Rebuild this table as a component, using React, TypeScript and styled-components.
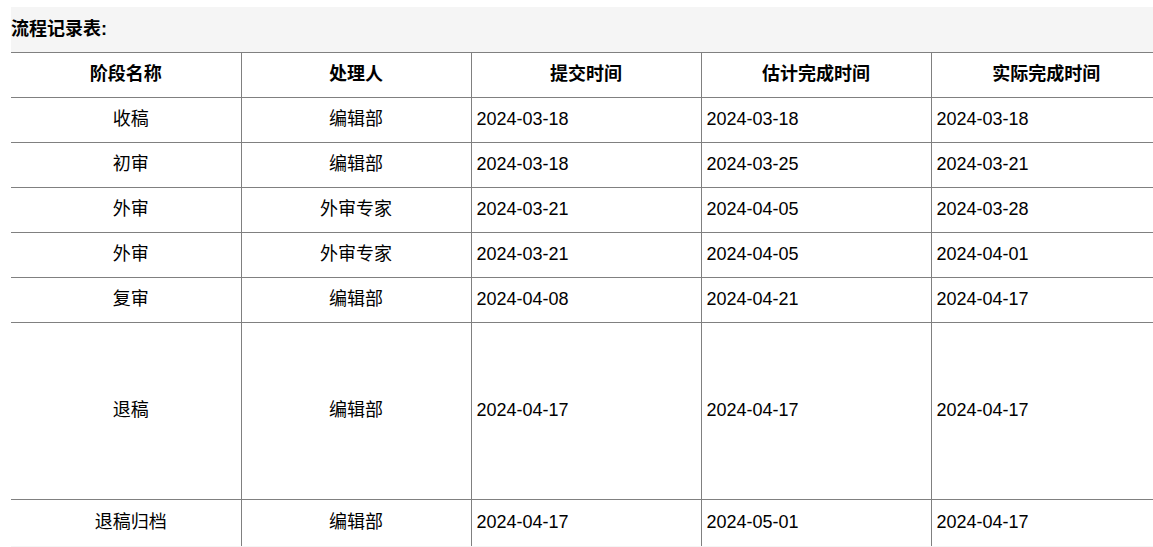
import React, { FC } from "react";
import styled, { createGlobalStyle } from "styled-components";

interface IRecord {
	stage: string;
	handler: string;
	submitted: string;
	estimated: string;
	finished: string;
	tall?: boolean;
}

const records: IRecord[] = [
	{ stage: "收稿", handler: "编辑部", submitted: "2024-03-18", estimated: "2024-03-18", finished: "2024-03-18" },
	{ stage: "初审", handler: "编辑部", submitted: "2024-03-18", estimated: "2024-03-25", finished: "2024-03-21" },
	{ stage: "外审", handler: "外审专家", submitted: "2024-03-21", estimated: "2024-04-05", finished: "2024-03-28" },
	{ stage: "外审", handler: "外审专家", submitted: "2024-03-21", estimated: "2024-04-05", finished: "2024-04-01" },
	{ stage: "复审", handler: "编辑部", submitted: "2024-04-08", estimated: "2024-04-21", finished: "2024-04-17" },
	{ stage: "退稿", handler: "编辑部", submitted: "2024-04-17", estimated: "2024-04-17", finished: "2024-04-17", tall: true },
	{ stage: "退稿归档", handler: "编辑部", submitted: "2024-04-17", estimated: "2024-05-01", finished: "2024-04-17" },
];

const headers = ["阶段名称", "处理人", "提交时间", "估计完成时间", "实际完成时间"];

const App: FC = () => {
	return (
		<>
			<GlobalStyle />
			<Page>
				<Panel>
					<Title>流程记录表:</Title>
					<Table>
						<thead>
							<tr>
								{headers.map((h) => (
									<HeadCell key={h}>{h}</HeadCell>
								))}
							</tr>
						</thead>
						<tbody>
							{records.map((r, i) => (
								<Row key={i} $tall={r.tall}>
									<Cell $center $indent>
										{r.stage}
									</Cell>
									<Cell $center>{r.handler}</Cell>
									<Cell>{r.submitted}</Cell>
									<Cell>{r.estimated}</Cell>
									<Cell>{r.finished}</Cell>
								</Row>
							))}
						</tbody>
					</Table>
				</Panel>
			</Page>
		</>
	);
};

export default App;

const GlobalStyle = createGlobalStyle`
	body {
		margin: 0;
		overflow: hidden;
		background: #fff;
		font-family: "Liberation Sans", "Noto Sans CJK SC", sans-serif;
		color: #000;
	}
`;

const Page = styled.div`
	padding: 7px 0 0 11px;
	width: 1153px;
	overflow: hidden;
`;

const Panel = styled.div`
	width: 1150px;
	background-color: #f5f5f5;
	padding-bottom: 10px;
`;

const Title = styled.div`
	height: 45px;
	display: flex;
	align-items: center;
	font-size: 18px;
	line-height: 20px;
	font-weight: bold;
	padding-bottom: 2px;
	box-sizing: border-box;
`;

const Table = styled.table`
	width: 1150px;
	border-collapse: collapse;
	table-layout: fixed;
	background-color: #fff;
	border-top: 1px solid #808080;
	font-size: 18px;
	line-height: 20px;
`;

const HeadCell = styled.th`
	height: 41px;
	padding: 0 5px 3px;
	font-weight: bold;
	text-align: center;
	border-bottom: 1px solid #808080;
	border-left: 1px solid #808080;
	&:first-child {
		border-left: none;
	}
`;

const Row = styled.tr<{ $tall?: boolean }>`
	height: ${(p) => (p.$tall ? "177px" : "45px")};
	&:last-child {
		height: 46px;
	}
	&:last-child td {
		border-bottom: none;
	}
`;

const Cell = styled.td<{ $center?: boolean; $indent?: boolean }>`
	padding: 0 5px 2px ${(p) => (p.$indent ? "15px" : "5px")};
	text-align: ${(p) => (p.$center ? "center" : "left")};
	border-bottom: 1px solid #808080;
	border-left: 1px solid #808080;
	&:first-child {
		border-left: none;
	}
`;
